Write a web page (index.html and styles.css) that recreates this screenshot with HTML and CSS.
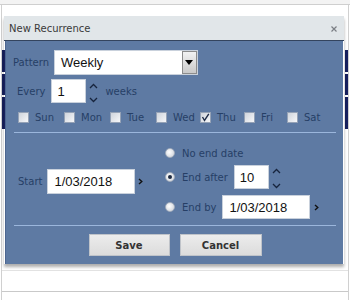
FILE: index.html
```html
<!DOCTYPE html>
<html>
<head>
<meta charset="utf-8">
<link rel="stylesheet" href="styles.css">
</head>
<body>
<div class="scene">
  <div class="bg">
    <div class="bg-top"></div>
    <div class="bg-main">
      <div class="bg-space"></div>
      <div class="bg-event"><span class="ev-l"></span><span class="ev-r"></span></div>
      <div class="bg-event"><span class="ev-l"></span><span class="ev-r"></span></div>
      <div class="bg-event short"><span class="ev-l"></span><span class="ev-r"></span></div>
      <div class="bg-fill"></div>
      <div class="bg-line"></div>
      <div class="bg-line2"></div>
    </div>
  </div>

  <div class="dialog">
    <div class="titlebar">
      <span class="title">New Recurrence</span>
      <svg class="close" width="6" height="6" viewBox="0 0 6 6"><path d="M0.5 0.5 L5.5 5.5 M5.5 0.5 L0.5 5.5" stroke="#7b7f85" stroke-width="1.2" fill="none"/></svg>
    </div>
    <div class="body">
      <div class="row pattern-row">
        <span class="lbl">Pattern</span>
        <div class="select">
          <span class="select-text">Weekly</span>
          <span class="dd-btn"><span class="tri"></span></span>
        </div>
      </div>

      <div class="row every-row">
        <span class="lbl">Every</span>
        <div class="input small-input">1</div>
        <svg class="spin" width="9" height="24" viewBox="0 0 9 24"><polyline points="1,9 4.5,5.5 8,9" fill="none" stroke="#17243d" stroke-width="1.3"/><polyline points="1,19 4.5,22.5 8,19" fill="none" stroke="#17243d" stroke-width="1.3"/></svg>
        <span class="lbl weeks">weeks</span>
      </div>

      <div class="days">
        <label class="day"><span class="cb"></span><span class="lbl">Sun</span></label>
        <label class="day"><span class="cb"></span><span class="lbl">Mon</span></label>
        <label class="day"><span class="cb"></span><span class="lbl">Tue</span></label>
        <label class="day"><span class="cb"></span><span class="lbl">Wed</span></label>
        <label class="day"><span class="cb checked"><svg width="9" height="9" viewBox="0 0 9 9"><polyline points="1.5,4 3.5,7.5 7.8,0.8" fill="none" stroke="#1d2b47" stroke-width="1.4"/></svg></span><span class="lbl">Thu</span></label>
        <label class="day"><span class="cb"></span><span class="lbl">Fri</span></label>
        <label class="day"><span class="cb"></span><span class="lbl">Sat</span></label>
      </div>

      <div class="sep sep1"></div>

      <div class="range">
        <div class="start-col">
          <span class="lbl">Start</span>
          <div class="input date-input">1/03/2018</div>
          <svg class="chev" width="5" height="7" viewBox="0 0 5 7"><polyline points="1,1 3.8,3.5 1,6" fill="none" stroke="#111" stroke-width="1.4"/></svg>
        </div>
        <div class="end-col">
          <div class="rrow r1">
            <span class="radio"></span>
            <span class="lbl">No end date</span>
          </div>
          <div class="rrow r2">
            <span class="radio on"></span>
            <span class="lbl">End after</span>
            <div class="input small-input">10</div>
            <svg class="spin spin2" width="9" height="24" viewBox="0 0 9 24"><polyline points="1,8 4.5,4.5 8,8" fill="none" stroke="#17243d" stroke-width="1.3"/><polyline points="1,19 4.5,22.5 8,19" fill="none" stroke="#17243d" stroke-width="1.3"/></svg>
          </div>
          <div class="rrow r3">
            <span class="radio"></span>
            <span class="lbl">End by</span>
            <div class="input date-input end-date">1/03/2018</div>
            <svg class="chev" width="5" height="7" viewBox="0 0 5 7"><polyline points="1,1 3.8,3.5 1,6" fill="none" stroke="#111" stroke-width="1.4"/></svg>
          </div>
        </div>
      </div>

      <div class="sep sep2"></div>

      <div class="buttons">
        <button class="btn save">Save</button>
        <button class="btn cancel">Cancel</button>
      </div>
    </div>
  </div>
</div>
</body>
</html>
```

FILE: styles.css
```css
html, body {
  margin: 0;
  padding: 0;
  background: #ffffff;
}

.scene {
  position: relative;
  width: 350px;
  height: 300px;
  overflow: hidden;
  font-family: "DejaVu Sans", Verdana, sans-serif;
}

/* background page */
.bg {
  width: 350px;
  height: 300px;
}
.bg-top {
  height: 4px;
  background: #f3f3f3;
  border-bottom: 1px solid #cfcfcf;
}
.bg-main {
  margin-left: 1px;
  width: 346px;
  height: 295px;
  border-left: 1px solid #d0d0d0;
  border-right: 1px solid #d0d0d0;
  display: flex;
  flex-direction: column;
}
.bg-space {
  height: 45px;
}
.bg-event {
  height: 22px;
  margin-bottom: 2px;
  display: flex;
  justify-content: space-between;
}
.bg-event.short {
  height: 32px;
}
.ev-l {
  width: 4px;
  background: #17205e;
}
.ev-r {
  width: 3px;
  background: #17205e;
}
.bg-fill {
  height: 140px;
}
.bg-line {
  height: 20px;
  border-top: 1px solid #e2e2e2;
}
.bg-line2 {
  height: 8px;
  border-top: 1px solid #c9c9c9;
}

/* dialog */
.dialog {
  position: absolute;
  left: 4px;
  top: 16px;
  width: 340px;
  box-shadow: 0 3px 3px rgba(0, 0, 0, 0.32);
}
.titlebar {
  height: 24px;
  background: #e1e6e9;
  border-bottom: 1px solid #34445e;
  display: flex;
  align-items: center;
  justify-content: space-between;
  padding: 0 7px 0 5px;
}
.title {
  font-size: 10px;
  color: #3a3a3a;
}
.close {
  display: block;
  margin-top: 1px;
}
.body {
  margin: 0 1px;
  height: 223px;
  box-sizing: border-box;
  background: #5e7aa3;
  border-left: 1px solid #4d6690;
  padding: 9px 7px 0 7px;
}

.lbl {
  font-size: 10px;
  color: #263f66;
  white-space: nowrap;
}

.row {
  display: flex;
  align-items: center;
}
.pattern-row {
  height: 25px;
  gap: 5px;
}
.select {
  width: 144px;
  height: 25px;
  box-sizing: border-box;
  background: #fff;
  border: 1px solid #c9d1dc;
  display: flex;
  align-items: center;
  justify-content: space-between;
  padding-left: 6px;
}
.select-text {
  font-family: "Liberation Sans", Arial, sans-serif;
  font-size: 13px;
  color: #111;
}
.dd-btn {
  width: 15px;
  height: 23px;
  box-sizing: border-box;
  border: 1px solid #8c8c8c;
  background: linear-gradient(#f2f2f2, #c9c9c9);
  display: flex;
  align-items: center;
  justify-content: center;
}
.tri {
  width: 0;
  height: 0;
  border-left: 4px solid transparent;
  border-right: 4px solid transparent;
  border-top: 5px solid #000;
}

.every-row {
  margin-top: 4px;
  height: 24px;
  padding-left: 4px;
  gap: 6px;
}
.input {
  box-sizing: border-box;
  background: #fff;
  border: 1px solid #c9d1dc;
  font-family: "Liberation Sans", Arial, sans-serif;
  font-size: 13px;
  color: #111;
  display: flex;
  align-items: center;
  padding-left: 5px;
}
.small-input {
  width: 35px;
  height: 24px;
}
.spin {
  display: block;
  margin-left: -3px;
}
.weeks {
  margin-left: 1px;
}

.days {
  margin-top: 4px;
  height: 20px;
  padding-left: 5px;
  display: grid;
  grid-template-columns: 46px 46px 46px 44px 44px 43px auto;
  align-items: center;
}
.day {
  display: flex;
  align-items: center;
  gap: 6px;
}
.cb {
  width: 11px;
  height: 11px;
  box-sizing: border-box;
  border: 1px solid #95a2b6;
  background: linear-gradient(135deg, #cfd4dc, #f6f7f9);
  display: flex;
  align-items: center;
  justify-content: center;
}

.sep {
  height: 1px;
  background: #9bb6dc;
  margin-left: 1px;
}
.sep1 {
  margin-top: 5px;
}

.range {
  margin-top: 10px;
  display: flex;
  align-items: center;
}
.start-col {
  width: 151px;
  padding-left: 5px;
  box-sizing: border-box;
  display: flex;
  align-items: center;
  gap: 5px;
}
.date-input {
  width: 88px;
  height: 25px;
  padding-left: 6px;
}
.chev {
  display: block;
  margin-left: -2px;
}
.end-col {
  display: flex;
  flex-direction: column;
}
.rrow {
  display: flex;
  align-items: center;
  gap: 6px;
}
.r1 {
  height: 20px;
}
.r2 {
  margin-top: 2px;
  height: 24px;
}
.r3 {
  margin-top: 6px;
  height: 24px;
}
.radio {
  width: 10px;
  height: 10px;
  box-sizing: border-box;
  border-radius: 50%;
  border: 1px solid #a3adbd;
  background: radial-gradient(circle at 40% 40%, #ffffff, #c9ced6);
  margin: 0 1px 0 1px;
  display: flex;
  align-items: center;
  justify-content: center;
}
.radio.on::after {
  content: "";
  width: 4px;
  height: 4px;
  border-radius: 50%;
  background: #1c2940;
}
.end-date {
  height: 24px;
}

.sep2 {
  margin-top: 6px;
}

.buttons {
  margin-top: 8px;
  display: flex;
  justify-content: center;
  gap: 10px;
}
.btn {
  height: 22px;
  box-sizing: border-box;
  margin: 0;
  padding: 0;
  border: 1px solid #bfc3c9;
  background: linear-gradient(#ececec, #dcdcdc);
  font-family: "DejaVu Sans", Verdana, sans-serif;
  font-weight: bold;
  font-size: 10px;
  color: #333;
}
.save {
  width: 81px;
  margin-left: 1px;
}
.cancel {
  width: 82px;
}
```
